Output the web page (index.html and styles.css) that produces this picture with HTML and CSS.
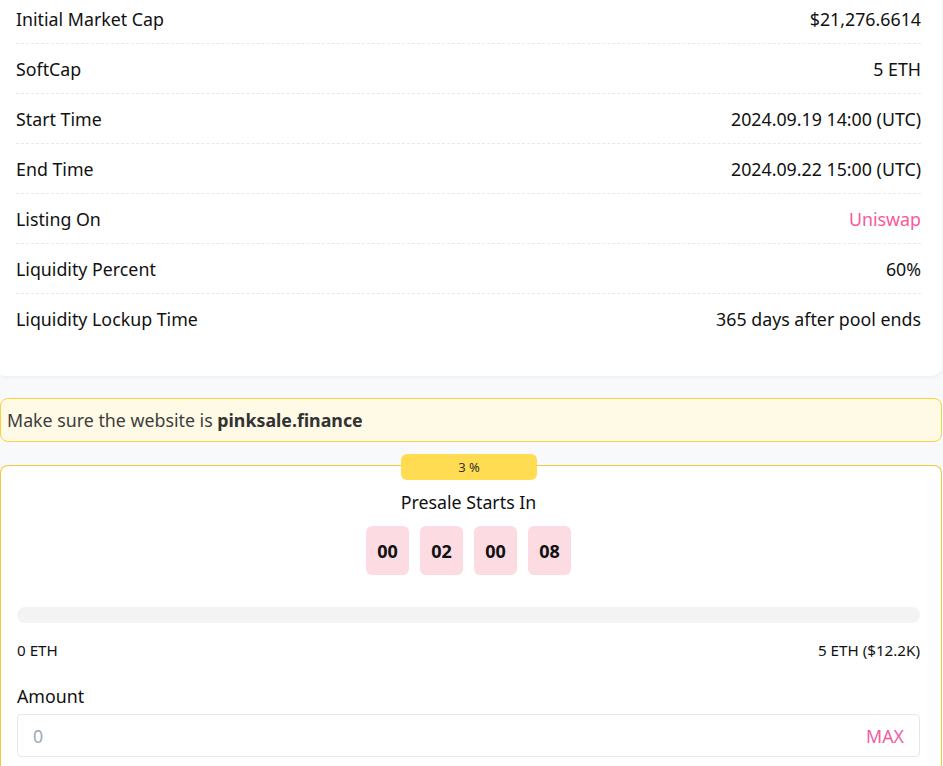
FILE: index.html
```html
<!DOCTYPE html>
<html lang="en">
<head>
  <meta charset="UTF-8" />
  <title>Presale - PinkSale</title>
  <link rel="stylesheet" href="styles.css">
</head>
<body>
  <div class="info-card">
    <div class="row"><span>Initial Market Cap</span><span>$21,276.6614</span></div>
    <div class="row"><span>SoftCap</span><span>5 ETH</span></div>
    <div class="row"><span>Start Time</span><span>2024.09.19 14:00 (UTC)</span></div>
    <div class="row"><span>End Time</span><span>2024.09.22 15:00 (UTC)</span></div>
    <div class="row"><span>Listing On</span><a href="#" class="pink">Uniswap</a></div>
    <div class="row"><span>Liquidity Percent</span><span>60%</span></div>
    <div class="row"><span>Liquidity Lockup Time</span><span>365 days after pool ends</span></div>
  </div>

  <div class="alert"><span>Make sure the website is <b>pinksale.finance</b></span></div>

  <div class="sale-card">
    <div class="badge">3 %</div>
    <div class="sale-title">Presale Starts In</div>
    <div class="countdown">
      <div class="cd-box">00</div>
      <div class="cd-box">02</div>
      <div class="cd-box">00</div>
      <div class="cd-box">08</div>
    </div>

    <div class="progress"><div class="progress-fill" style="width: 0%"></div></div>
    <div class="progress-labels">
      <span>0 ETH</span>
      <span>5 ETH ($12.2K)</span>
    </div>

    <div class="amount-label">Amount</div>
    <div class="amount-input">
      <input type="text" placeholder="0">
      <button class="max-btn">MAX</button>
    </div>
  </div>
</body>
</html>
```

FILE: styles.css
```css
body {
  font-family: "Noto Sans", "Open Sans", Arial, sans-serif;
  background: #f8f9fb;
  color: #111;
  margin: 0;
  padding: 0 1px 0 0;
}

.info-card {
  background: white;
  margin: -6px 0 0 -5px;
  padding: 0 21px 33px 21px;
  border-radius: 0 0 10px 10px;
  box-shadow: 0 1px 4px rgba(0,0,0,0.06);
}

.row {
  display: flex;
  justify-content: space-between;
  align-items: center;
  height: 49px;
  font-size: 17.8px;
  border-bottom: 1px dashed #e8e8e8;
}

.row:last-child {
  border-bottom: none;
}

.pink {
  color: #f95997;
  text-decoration: none;
}

.alert {
  margin-top: 22px;
  height: 42px;
  display: flex;
  align-items: center;
  padding-left: 6px;
  background: #fffae6;
  border: 1px solid #fbd13d;
  border-radius: 8px;
  font-size: 17.8px;
  color: #3d3d3d;
}

.alert b {
  color: #333;
}

.sale-card {
  position: relative;
  margin-top: 23px;
  background: white;
  border: 1px solid #f5c542;
  border-bottom: none;
  border-radius: 8px 8px 0 0;
  padding: 24px 21px 9px 16px;
}

.badge {
  position: absolute;
  top: -12px;
  left: 400px;
  width: 136px;
  height: 26px;
  line-height: 26px;
  text-align: center;
  background: #ffdc52;
  border-radius: 6px;
  font-size: 13px;
  color: #333;
}

.sale-title {
  text-align: center;
  font-size: 17.8px;
  line-height: 24px;
}

.countdown {
  display: flex;
  justify-content: center;
  gap: 11px;
  margin-top: 12px;
}

.cd-box {
  width: 43px;
  height: 49px;
  display: flex;
  align-items: center;
  justify-content: center;
  background: #fcdbe2;
  border-radius: 6px;
  font-size: 18px;
  font-weight: bold;
}

.progress {
  margin-top: 32px;
  height: 16px;
  background: #f3f3f3;
  border-radius: 8px;
  overflow: hidden;
}

.progress-fill {
  height: 100%;
  background: #f95997;
}

.progress-labels {
  display: flex;
  justify-content: space-between;
  margin-top: 17px;
  font-size: 15.2px;
  line-height: 20px;
}

.amount-label {
  margin-top: 24px;
  font-size: 17.8px;
  line-height: 24px;
}

.amount-input {
  display: flex;
  align-items: center;
  margin-top: 6px;
  height: 41px;
  border: 1px solid #e5e7eb;
  border-radius: 4px;
  padding: 0 15px;
}

.amount-input input {
  flex: 1;
  border: none;
  outline: none;
  font-family: inherit;
  font-size: 17.8px;
  color: #111;
  background: transparent;
  padding: 0;
}

.amount-input input::placeholder {
  color: #a0a8b8;
}

.max-btn {
  border: none;
  background: none;
  color: #f0609e;
  font-family: inherit;
  font-size: 17.8px;
  padding: 0;
  cursor: pointer;
}
```
